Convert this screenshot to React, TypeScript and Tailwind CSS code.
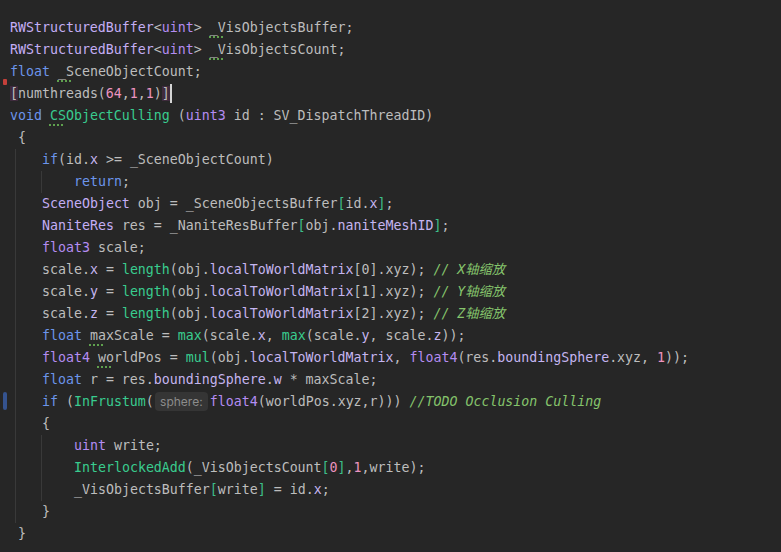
import React from "react";

type Seg = [string, string?];

const K = "text-[#6C95EB]";
const T = "text-[#C4AEF5]";
const V = "text-[#B48CF2]";
const F = "text-[#39CC8F]";
const N = "text-[#ED94C0]";
const C = "text-[#85C46C] italic";
const P = "text-[#C5B5F0]";
const G = "text-[#3DBE8A]";
const U = "underline decoration-dotted decoration-[#5FA04E] decoration-2 underline-offset-[4px]";
const UF = "text-[#39CC8F] underline decoration-dotted decoration-[#5FA04E] decoration-2 underline-offset-[4px]";
const HL = "bg-[#3F2B3D]";

const HINT = "__HINT__";
const CURSOR = "__CURSOR__";

const head: Seg[][] = [
  [["RWStructuredBuffer", T], ["<"], ["uint", V], ["> "], ["_V", U], ["isObjectsBuffer;"]],
  [["RWStructuredBuffer", T], ["<"], ["uint", V], ["> "], ["_V", U], ["isObjectsCount;"]],
  [["float", K], [" "], ["_S", U], ["ceneObjectCount;"]],
  [["[", HL], ["numthreads("], ["64", N], [","], ["1", N], [","], ["1", N], [")"], ["]", HL], [CURSOR]],
  [["void", K], [" "], ["CS", UF], ["ObjectCulling", F], [" ("], ["uint3", V], [" id : SV_DispatchThreadID)"]],
  [[" {"]],
];

const ifLine: Seg[] = [["if", K], ["(id."], ["x", P], [" >= _SceneObjectCount)"]];
const returnLine: Seg[] = [["return", K], [";"]];

const body: Seg[][] = [
  [["SceneObject", T], [" obj = _SceneObjectsBuffer"], ["[", G], ["id."], ["x", P], ["]", G], [";"]],
  [["NaniteRes", T], [" res = _NaniteResBuffer"], ["[", G], ["obj."], ["naniteMeshID", P], ["]", G], [";"]],
  [["float3", V], [" scale;"]],
  [["scale."], ["x", P], [" = "], ["length", F], ["(obj."], ["localToWorldMatrix", P], ["[0].xyz); "], ["// X轴缩放", C]],
  [["scale."], ["y", P], [" = "], ["length", F], ["(obj."], ["localToWorldMatrix", P], ["[1].xyz); "], ["// Y轴缩放", C]],
  [["scale."], ["z", P], [" = "], ["length", F], ["(obj."], ["localToWorldMatrix", P], ["[2].xyz); "], ["// Z轴缩放", C]],
  [["float", K], [" "], ["ma", U], ["xScale = "], ["max", F], ["(scale."], ["x", P], [", "], ["max", F], ["(scale."], ["y", P], [", scale."], ["z", P], ["));"]],
  [["float4", V], [" "], ["wo", U], ["rldPos = "], ["mul", F], ["(obj."], ["localToWorldMatrix", P], [", "], ["float4", V], ["(res."], ["boundingSphere", P], [".xyz, "], ["1", N], ["));"]],
  [["float", K], [" r = res."], ["boundingSphere", P], ["."], ["w", P], [" * maxScale;"]],
  [["if", K], [" ("], ["InFrustum", F], ["("], [HINT], ["float4", V], ["(worldPos.xyz,r))) "], ["//TODO Occlusion Culling", C]],
  [["{"]],
];

const inner: Seg[][] = [
  [["uint", V], [" write;"]],
  [["InterlockedAdd", F], ["(_VisObjectsCount"], ["[", G], ["0", N], ["]", G], [","], ["1", N], [",write);"]],
  [["_VisObjectsBuffer"], ["[", G], ["write"], ["]", G], [" = id."], ["x", P], [";"]],
];

function Line({ segs }: { segs: Seg[] }) {
  return (
    <div className="h-[22px] leading-[22px] whitespace-pre">
      {segs.map(([text, cls], i) => {
        if (text === HINT)
          return (
            <span
              key={i}
              className="inline-block align-middle h-[19px] leading-[19px] w-[53px] ml-[1px] mr-[2px] -mt-[2px] rounded-[4px] bg-[#353535] text-[#8C8C8C] text-[12px] text-center not-italic font-['Inter',sans-serif]"
            >
              sphere:
            </span>
          );
        if (text === CURSOR)
          return <span key={i} className="inline-block align-middle -mt-[2px] w-[2px] h-[19px] bg-[#D4D4D4]" />;
        return (
          <span key={i} className={cls}>
            {text}
          </span>
        );
      })}
    </div>
  );
}

export default function App() {
  return (
    <div className="relative w-[781px] h-[552px] overflow-hidden bg-[#262626] text-[#BDBDBD] text-[13.28px] font-['DejaVu_Sans_Mono','Noto_Sans_CJK_SC',monospace]">
      {/* gutter markers */}
      <div className="absolute left-[3px] top-[79px] h-[6px] w-[4px] rounded-[1px] bg-[#C4403A]" />
      <div className="absolute left-[3px] top-[392px] h-[18px] w-[4px] rounded-[2px] bg-[#35538F]" />

      <div className="flex flex-col pt-[17px] pl-[10px]">
        {head.map((segs, i) => (
          <Line key={i} segs={segs} />
        ))}
        {/* function body with indent guide */}
        <div className="ml-[5px] border-l border-[#393939] pl-[26px] flex flex-col">
          <Line segs={ifLine} />
          <div className="-ml-px border-l border-[#393939] pl-[32px]">
            <Line segs={returnLine} />
          </div>
          {body.map((segs, i) => (
            <Line key={i} segs={segs} />
          ))}
          <div className="-ml-px border-l border-[#393939] pl-[32px] flex flex-col">
            {inner.map((segs, i) => (
              <Line key={i} segs={segs} />
            ))}
          </div>
          <Line segs={[["}"]]} />
        </div>
        <Line segs={[[" }"]]} />
      </div>
    </div>
  );
}
